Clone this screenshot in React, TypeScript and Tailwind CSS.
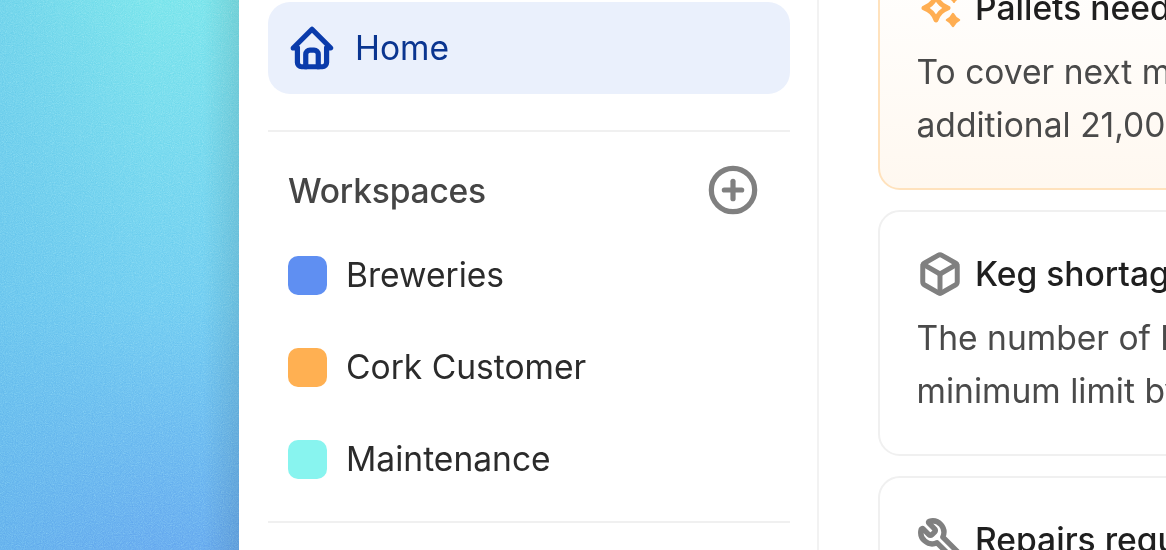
import { Box, CirclePlus, Wrench } from 'lucide-react';
import type { ReactNode } from 'react';

const workspaces = [
  { name: 'Breweries', color: 'bg-[#5f8ff2]' },
  { name: 'Cork Customer', color: 'bg-[#ffb052]' },
  { name: 'Maintenance', color: 'bg-[#88f4ef]' },
];

function HomeIcon() {
  return (
    <svg width="50" height="50" viewBox="0 0 24 24" fill="none" stroke="#0a3bab" strokeWidth="2.5" strokeLinecap="round" strokeLinejoin="round">
      <path d="M5 12H3l9-9 9 9h-2" />
      <path d="M5 12v7a2 2 0 0 0 2 2h10a2 2 0 0 0 2-2v-7" />
      <path d="M9 21v-6a2 2 0 0 1 2-2h2a2 2 0 0 1 2 2v6" />
    </svg>
  );
}

function SparkIcon() {
  return (
    <svg width="42" height="42" viewBox="0 0 42 42" fill="none" stroke="#ffae52" strokeLinejoin="round">
      <path d="M17 9Q20 18 29 21Q20 24 17 33Q14 24 5 21Q14 18 17 9z" strokeWidth="5" />
      <path d="M34 27Q36 31 40 33Q36 35 34 39Q32 35 28 33Q32 31 34 27z" fill="#ffae52" strokeWidth="2.5" />
      <path d="M35 9Q36 11 38 12Q36 13 35 15Q34 13 32 12Q34 11 35 9z" fill="#ffae52" strokeWidth="2" />
    </svg>
  );
}

function AlertCard({ icon, title, lines, warm }: { icon: ReactNode; title: string; lines: string[]; warm?: boolean }) {
  return (
    <div
      className={`h-[246px] w-[600px] shrink-0 rounded-[22px] border-2 pl-[36.5px] pt-[37px] ${
        warm ? 'border-[#ffe2bd] bg-gradient-to-b from-white to-[#fff8f0]' : 'border-[#f0f0f0] bg-white'
      }`}
    >
      <div className="flex h-[50px] items-center gap-[12.5px]">
        <span className="flex w-[46px] shrink-0 justify-center">{icon}</span>
        <span className="whitespace-nowrap text-[33.6px] font-medium text-[#1f1f1f]">{title}</span>
      </div>
      <p className="mt-[12px] whitespace-nowrap text-[33.6px] leading-[53px] text-[#4a4a4a]">
        {lines[0]}
        <br />
        {lines[1]}
      </p>
    </div>
  );
}

export default function App() {
  return (
    <div className="flex h-[550px] w-[1166px] overflow-hidden bg-white font-['Inter',sans-serif]">
      <div className="relative w-[239px] shrink-0 overflow-hidden bg-[linear-gradient(180deg,#70e2ea_0%,#68c8f0_55%,#5fa2ee_100%)]">
        <div className="absolute inset-y-0 left-0 w-[150px] bg-gradient-to-r from-[#5ab4e8]/40 to-transparent" />
        <svg className="absolute inset-0 h-full w-full opacity-[0.6] mix-blend-overlay">
          <filter id="grain">
            <feTurbulence type="fractalNoise" baseFrequency="0.9" numOctaves="2" stitchTiles="stitch" />
            <feColorMatrix type="saturate" values="0" />
          </filter>
          <rect width="100%" height="100%" filter="url(#grain)" />
        </svg>
        <div className="absolute inset-y-0 right-0 w-[36px] bg-gradient-to-r from-transparent to-black/[0.09]" />
      </div>

      <aside className="w-[580px] shrink-0 border-r-2 border-[#f2f2f2] bg-white pl-[29px] pr-[27px] pt-[2px]">
        <div className="flex h-[92px] items-center gap-[18px] rounded-[22px] bg-[#eaf0fc] pl-[19px]">
          <HomeIcon />
          <span className="text-[33.6px] text-[#0a3590]">Home</span>
        </div>
        <div className="mt-[36px] h-[2px] bg-[#f0f0f0]" />
        <div className="mt-[34px] flex h-[48px] items-center justify-between pl-[20px] pr-[33px]">
          <span className="pt-[2px] text-[33.6px] font-medium tracking-[-0.2px] text-[#454545]">Workspaces</span>
          <CirclePlus size={52} strokeWidth={2.4} color="#808080" className="-mr-[2px]" />
        </div>
        <ul className="mt-[15px] flex flex-col">
          {workspaces.map((w) => (
            <li key={w.name} className="flex h-[92px] items-center gap-[19px] pl-[20px]">
              <span className={`h-[39px] w-[39px] rounded-[10px] ${w.color}`} />
              <span className="text-[33.6px] text-[#2b2b2b]">{w.name}</span>
            </li>
          ))}
        </ul>
        <div className="mt-[16px] h-[2px] bg-[#f0f0f0]" />
      </aside>

      <main className="min-w-0 flex-1 overflow-hidden pl-[59px]">
        <div className="mt-[-56px] flex flex-col gap-[20px]">
          <AlertCard
            warm
            icon={<SparkIcon />}
            title="Pallets needed"
            lines={["To cover next month's demand", 'additional 21,000 pallets']}
          />
          <AlertCard
            icon={<Box size={48} strokeWidth={2.6} color="#808080" />}
            title="Keg shortage"
            lines={['The number of kegs is below', 'minimum limit by 12%']}
          />
          <AlertCard
            icon={<Wrench size={46} strokeWidth={2.8} color="#808080" className="-scale-x-100" />}
            title="Repairs required"
            lines={['Two filling lines need', 'scheduled repairs']}
          />
        </div>
      </main>
    </div>
  );
}
